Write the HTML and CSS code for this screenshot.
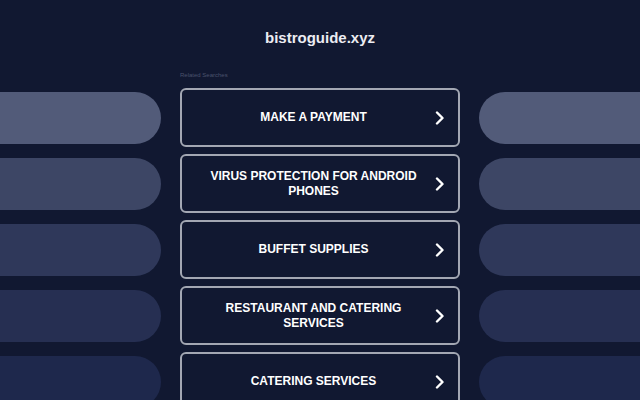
FILE: index.html
```html
<!DOCTYPE html>
<html lang="en">
<head>
    <meta charset="UTF-8">
    <meta name="viewport" content="width=device-width, initial-scale=1.0">
    <title>bistroguide.xyz</title>
    <link rel="stylesheet" href="styles.css">
</head>
<body>

    <div class="header">
        <h1 class="domain">bistroguide.xyz</h1>
    </div>

    <div class="layout">
        <div></div>
        <div class="related-label">Related Searches</div>
        <div></div>

        <div class="pill pill-left shade-1"></div>
        <a class="search-link" href="#">
            <span class="search-text">MAKE A PAYMENT</span>
            <svg class="chevron" viewBox="0 0 10 14"><path d="M2 1.5 L7.5 7 L2 12.5"/></svg>
        </a>
        <div class="pill pill-right shade-1"></div>

        <div class="pill pill-left shade-2"></div>
        <a class="search-link" href="#">
            <span class="search-text">VIRUS PROTECTION FOR ANDROID PHONES</span>
            <svg class="chevron" viewBox="0 0 10 14"><path d="M2 1.5 L7.5 7 L2 12.5"/></svg>
        </a>
        <div class="pill pill-right shade-2"></div>

        <div class="pill pill-left shade-3"></div>
        <a class="search-link" href="#">
            <span class="search-text">BUFFET SUPPLIES</span>
            <svg class="chevron" viewBox="0 0 10 14"><path d="M2 1.5 L7.5 7 L2 12.5"/></svg>
        </a>
        <div class="pill pill-right shade-3"></div>

        <div class="pill pill-left shade-4"></div>
        <a class="search-link" href="#">
            <span class="search-text">RESTAURANT AND CATERING SERVICES</span>
            <svg class="chevron" viewBox="0 0 10 14"><path d="M2 1.5 L7.5 7 L2 12.5"/></svg>
        </a>
        <div class="pill pill-right shade-4"></div>

        <div class="pill pill-left shade-5"></div>
        <a class="search-link" href="#">
            <span class="search-text">CATERING SERVICES</span>
            <svg class="chevron" viewBox="0 0 10 14"><path d="M2 1.5 L7.5 7 L2 12.5"/></svg>
        </a>
        <div class="pill pill-right shade-5"></div>
    </div>

</body>
</html>
```

FILE: styles.css
```css
body {
    margin: 0;
    font-family: 'Liberation Sans', Arial, sans-serif;
    background-color: #111831;
    overflow: hidden;
}
.header {
    padding-top: 29px;
    text-align: center;
}
.domain {
    margin: 0;
    font-size: 15px;
    line-height: 18px;
    font-weight: bold;
    color: #ececf2;
}
.layout {
    display: grid;
    grid-template-columns: 1fr 280px 1fr;
    column-gap: 19px;
    row-gap: 7px;
    align-items: center;
    margin-top: 24px;
}
.related-label {
    font-size: 6px;
    line-height: 8px;
    color: #4a526c;
    margin-bottom: 2px;
}
.pill {
    height: 52px;
}
.pill-left {
    border-radius: 0 26px 26px 0;
}
.pill-right {
    border-radius: 26px 0 0 26px;
}
.shade-1 { background-color: #525b79; }
.shade-2 { background-color: #3d4665; }
.shade-3 { background-color: #2f385a; }
.shade-4 { background-color: #262f52; }
.shade-5 { background-color: #1e284c; }
.search-link {
    display: flex;
    align-items: center;
    height: 55px;
    padding: 0 13px 0 10px;
    border: 2px solid #a3a7b3;
    border-radius: 6px;
    background-color: #111831;
    color: #ffffff;
    text-decoration: none;
}
.search-text {
    flex: 1;
    text-align: center;
    font-size: 12px;
    line-height: 15px;
    font-weight: bold;
    padding: 0 6px;
}
.chevron {
    width: 10px;
    height: 14px;
    fill: none;
    stroke: #ffffff;
    stroke-width: 2.4;
    stroke-linecap: round;
    stroke-linejoin: round;
}
```
